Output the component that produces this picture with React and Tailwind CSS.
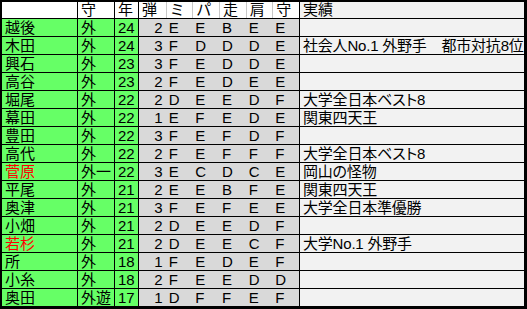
import React from "react";

const players = [
  { name: "越後", pos: "外", age: 24, stats: [2, "E", "E", "B", "E", "E"], note: "" },
  { name: "木田", pos: "外", age: 24, stats: [3, "F", "D", "D", "D", "E"], note: "社会人No.1 外野手　都市対抗8位" },
  { name: "興石", pos: "外", age: 23, stats: [3, "F", "E", "D", "D", "E"], note: "" },
  { name: "高谷", pos: "外", age: 23, stats: [2, "F", "E", "D", "E", "E"], note: "" },
  { name: "堀尾", pos: "外", age: 22, stats: [2, "D", "E", "E", "D", "F"], note: "大学全日本ベスト8" },
  { name: "幕田", pos: "外", age: 22, stats: [1, "E", "F", "E", "D", "E"], note: "関東四天王" },
  { name: "豊田", pos: "外", age: 22, stats: [3, "F", "E", "F", "D", "F"], note: "" },
  { name: "高代", pos: "外", age: 22, stats: [2, "F", "E", "F", "F", "F"], note: "大学全日本ベスト8" },
  { name: "菅原", pos: "外一", age: 22, stats: [3, "E", "C", "D", "C", "E"], note: "岡山の怪物", red: true },
  { name: "平尾", pos: "外", age: 21, stats: [2, "E", "E", "B", "F", "E"], note: "関東四天王" },
  { name: "奥津", pos: "外", age: 21, stats: [3, "F", "E", "F", "E", "E"], note: "大学全日本準優勝" },
  { name: "小畑", pos: "外", age: 21, stats: [2, "D", "E", "E", "D", "F"], note: "" },
  { name: "若杉", pos: "外", age: 21, stats: [2, "D", "E", "E", "C", "F"], note: "大学No.1 外野手", red: true },
  { name: "所", pos: "外", age: 18, stats: [1, "F", "E", "D", "E", "F"], note: "" },
  { name: "小糸", pos: "外", age: 18, stats: [2, "F", "E", "E", "D", "D"], note: "" },
  { name: "奥田", pos: "外遊", age: 17, stats: [1, "D", "F", "F", "E", "F"], note: "" },
];

const statHeads = ["弾", "ミ", "パ", "走", "肩", "守"];

const App = () => {
  return (
    <div
      className="w-[527px] h-[309px] bg-black pt-[2px] pl-[2px] pr-[3px] pb-[3px] text-[15px] text-black"
      style={{ fontFamily: '"Liberation Sans", "Noto Sans CJK JP", sans-serif' }}
    >
      <div className="flex flex-col h-full">
        {/* header */}
        <div className="flex h-[16px] leading-[16px] bg-white">
          <div className="w-[76px] shrink-0 border-r border-black"></div>
          <div className="w-[37px] shrink-0 border-r border-black pl-[3px]">守</div>
          <div className="w-[24px] shrink-0 border-r border-black pl-[3px]">年</div>
          <div className="w-[161px] shrink-0 border-r border-black grid grid-cols-6">
            {statHeads.map((h, i) => (
              <div key={i} className={`pl-[3px] ${i > 0 ? "border-l border-[#c8c8c8]" : ""}`}>
                {h}
              </div>
            ))}
          </div>
          <div className="flex-1 min-w-0 bg-[#f2f2f2] pl-[3px]">実績</div>
        </div>
        <div className="h-[2px] bg-black"></div>

        {/* body */}
        <div className="flex-1 flex flex-col">
          {players.map((p, idx) => (
            <div key={idx} className="flex-1 flex items-center leading-[17px] pt-[1px]">
              <div className={`w-[76px] shrink-0 h-full border-r border-black bg-[#66ff66] pl-[3px] flex items-center ${p.red ? "text-[#ff0000]" : ""}`}>
                {p.name}
              </div>
              <div className="w-[37px] shrink-0 h-full border-r border-black bg-[#66ff66] pl-[3px] flex items-center">
                {p.pos}
              </div>
              <div className="w-[24px] shrink-0 h-full border-r border-black bg-[#66ff66] pl-[3px] flex items-center">
                {p.age}
              </div>
              <div className="w-[161px] shrink-0 h-full border-r border-black bg-[#d9d9d9] grid grid-cols-6 items-center">
                {p.stats.map((s, i) => (
                  <div key={i} className={i === 0 ? "text-right pr-[3px]" : "pl-[3px]"}>
                    {s}
                  </div>
                ))}
              </div>
              <div className="flex-1 min-w-0 h-full bg-[#f2f2f2] pl-[3px] flex items-center whitespace-nowrap overflow-hidden [font-feature-settings:'palt'] tracking-[-0.2px]">
                {p.note}
              </div>
            </div>
          ))}
        </div>
      </div>
    </div>
  );
};

export default App;
